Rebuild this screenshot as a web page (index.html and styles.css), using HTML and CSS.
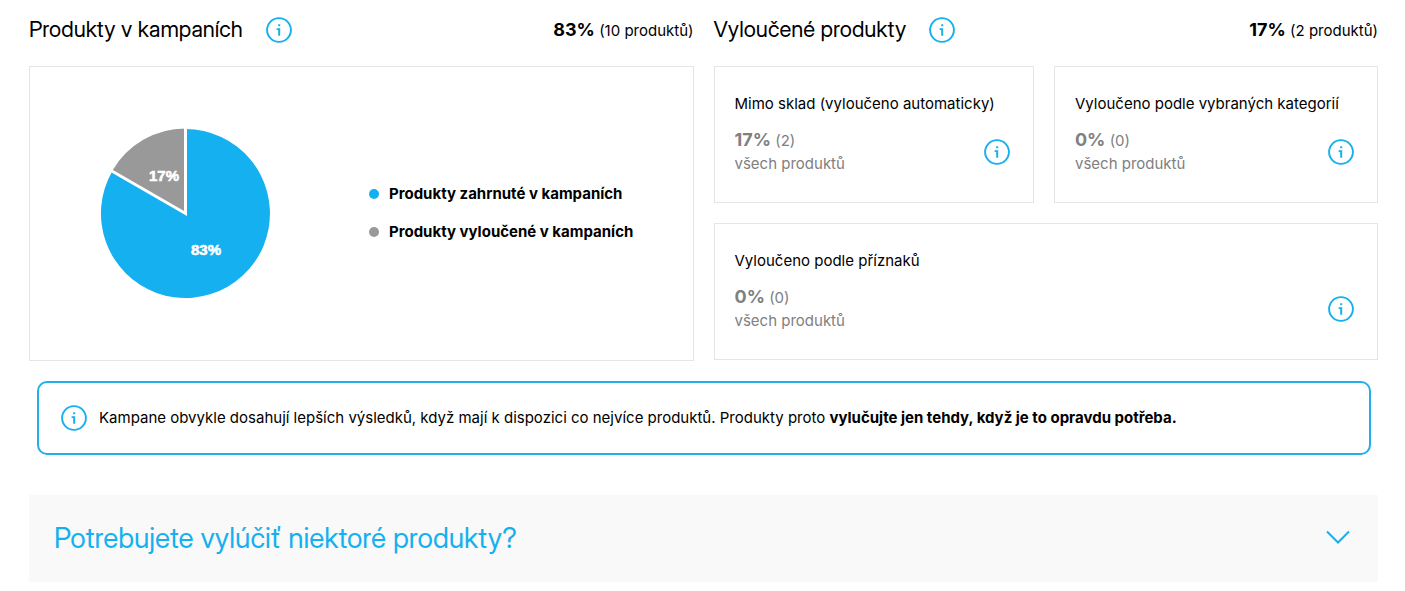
FILE: index.html
```html
<!DOCTYPE html>
<html lang="cs">
<head>
<meta charset="utf-8">
<meta name="viewport" content="width=device-width, initial-scale=1">
<title>Produkty v kampaních</title>
<link rel="stylesheet" href="styles.css">
</head>
<body>
<svg class="sprite" aria-hidden="true">
  <symbol id="info" viewBox="0 0 26 26">
    <circle cx="13" cy="13" r="11.9" fill="none" stroke="currentColor" stroke-width="1.9"/>
    <path d="M12.2 7.200h2v2h-2zM10.600 11.200h3.600v7.600h-2v-5.800h-1.600z" fill="currentColor"/>
  </symbol>
</svg>
<main class="page">
  <div class="overview">
    <section class="column">
      <header class="column-head">
        <h2 class="title">Produkty v kampaních</h2>
        <button class="info" type="button" aria-label="Informace"><svg class="icon"><use href="#info"/></svg></button>
        <p class="total"><strong class="percent">83%</strong> (10 produktů)</p>
      </header>
      <div class="card chart">
        <svg class="pie" viewBox="0 0 170 170" role="img" aria-label="83% zahrnuté, 17% vyloučené">
          <path class="slice-in" d="M84.500 85.500V1A84.500 84.500 0 1 1 11.300 43.200Z"/>
          <path class="slice-out" d="M84.500 85L11.300 42.700A84.500 84.500 0 0 1 84.500 0.500Z"/>
          <path class="divider" d="M84.500 -1V85.500L9.500 42.200"/>
          <text class="pie-label" x="63" y="53">17%</text>
          <text class="pie-label" x="105" y="127">83%</text>
        </svg>
        <ul class="legend">
          <li class="legend-item"><span class="dot dot-in"></span>Produkty zahrnuté v kampaních</li>
          <li class="legend-item"><span class="dot dot-out"></span>Produkty vyloučené v kampaních</li>
        </ul>
      </div>
    </section>
    <section class="column">
      <header class="column-head">
        <h2 class="title">Vyloučené produkty</h2>
        <button class="info" type="button" aria-label="Informace"><svg class="icon"><use href="#info"/></svg></button>
        <p class="total"><strong class="percent">17%</strong> (2 produktů)</p>
      </header>
      <div class="stats">
        <article class="card stat">
          <h3 class="stat-title">Mimo sklad (vyloučeno automaticky)</h3>
          <div class="stat-body">
            <p class="stat-text"><strong class="percent">17%</strong> (2)<br>všech produktů</p>
            <button class="info" type="button" aria-label="Informace"><svg class="icon"><use href="#info"/></svg></button>
          </div>
        </article>
        <article class="card stat">
          <h3 class="stat-title">Vyloučeno podle vybraných kategorií</h3>
          <div class="stat-body">
            <p class="stat-text"><strong class="percent">0%</strong> (0)<br>všech produktů</p>
            <button class="info" type="button" aria-label="Informace"><svg class="icon"><use href="#info"/></svg></button>
          </div>
        </article>
        <article class="card stat stat-wide">
          <h3 class="stat-title">Vyloučeno podle příznaků</h3>
          <div class="stat-body">
            <p class="stat-text"><strong class="percent">0%</strong> (0)<br>všech produktů</p>
            <button class="info" type="button" aria-label="Informace"><svg class="icon"><use href="#info"/></svg></button>
          </div>
        </article>
      </div>
    </section>
  </div>
  <aside class="notice">
    <svg class="icon" aria-hidden="true"><use href="#info"/></svg>
    <p class="notice-text">Kampane obvykle dosahují lepších výsledků, když mají k dispozici co nejvíce produktů. Produkty proto <strong>vylučujte jen tehdy, když je to opravdu potřeba.</strong></p>
  </aside>
  <button class="accordion" type="button" aria-expanded="false">
    <span class="accordion-title">Potrebujete vylúčiť niektoré produkty?</span>
    <svg class="chevron" viewBox="0 0 24 16" aria-hidden="true"><path d="M1 1.500L12 12.500L23 1.500" fill="none" stroke="currentColor" stroke-width="2"/></svg>
  </button>
</main>
</body>
</html>
```
FILE: styles.css
```css
* { box-sizing: border-box; }
body {
  margin: 0;
  background: #fff;
  color: #000;
  font: 400 15px/24px Inter, "Liberation Sans", sans-serif;
}
h2, h3, p, ul { margin: 0; padding: 0; font-weight: 400; }
strong { font-weight: 700; }
button { border: 0; padding: 0; background: none; font: inherit; cursor: pointer; }
.sprite { position: absolute; width: 0; height: 0; }
.page { padding: 14px 27px 9px 29px; }
.overview { display: grid; grid-template-columns: 1fr 1fr; gap: 20px; }
.column { display: flex; flex-direction: column; }
.column-head { display: flex; align-items: center; height: 32px; margin-bottom: 20px; }
.title {
  margin-right: 23px;
  padding-bottom: 2px;
  font-family: "Inter Display", Inter, sans-serif;
  font-size: 22px;
  line-height: 28px;
}
.info, .icon, .chevron { color: #15b0ef; }
.info { flex: none; display: block; }
.icon { display: block; flex: none; width: 26px; height: 26px; }
.total { margin-left: auto; }
.percent { font-size: 18px; font-weight: 700; }
.card { border: 1px solid #e5e5e5; }
.chart { flex: 1; display: flex; align-items: center; padding: 0 56px 2px 71px; gap: 98px; }
.pie { width: 170px; height: 170px; flex: none; overflow: visible; }
.slice-in { fill: #15b0ef; }
.slice-out { fill: #999; }
.divider { fill: none; stroke: #fff; stroke-width: 3; }
.pie-label { fill: #fff; stroke: #fff; stroke-width: 0.6px; font: 700 15px "Liberation Sans", sans-serif; text-anchor: middle; }
.legend { list-style: none; display: grid; gap: 14px; }
.legend-item { display: flex; align-items: center; gap: 10px; font-weight: 700; }
.dot { width: 10px; height: 10px; border-radius: 50%; }
.dot-in { background: #15b0ef; }
.dot-out { background: #999; }
.stats { display: flex; flex-wrap: wrap; gap: 20px; padding-bottom: 1px; }
.stat { flex: 1 1 auto; padding: 25px 23px 27px 20px; }
.stat-wide { flex-basis: 100%; }
.stat-title { font-size: 15px; line-height: 24px; }
.stat-body { display: flex; justify-content: space-between; align-items: center; margin-top: 12px; }
.stat-text { color: #808080; line-height: 23px; }
.notice {
  display: flex;
  align-items: center;
  gap: 12px;
  margin: 20px 7px 40px 8px;
  padding: 22px;
  border: 2px solid #23b0ea;
  border-radius: 10px;
}
.accordion {
  display: flex;
  align-items: center;
  justify-content: space-between;
  width: 100%;
  padding: 23px 28px 24px 25px;
  background: #f9f9f9;
  color: #15b0ef;
  text-align: left;
}
.accordion-title { font-family: "Inter Display", Inter, sans-serif; font-size: 28px; line-height: 40px; }
.chevron { width: 24px; height: 16px; flex: none; }
```
